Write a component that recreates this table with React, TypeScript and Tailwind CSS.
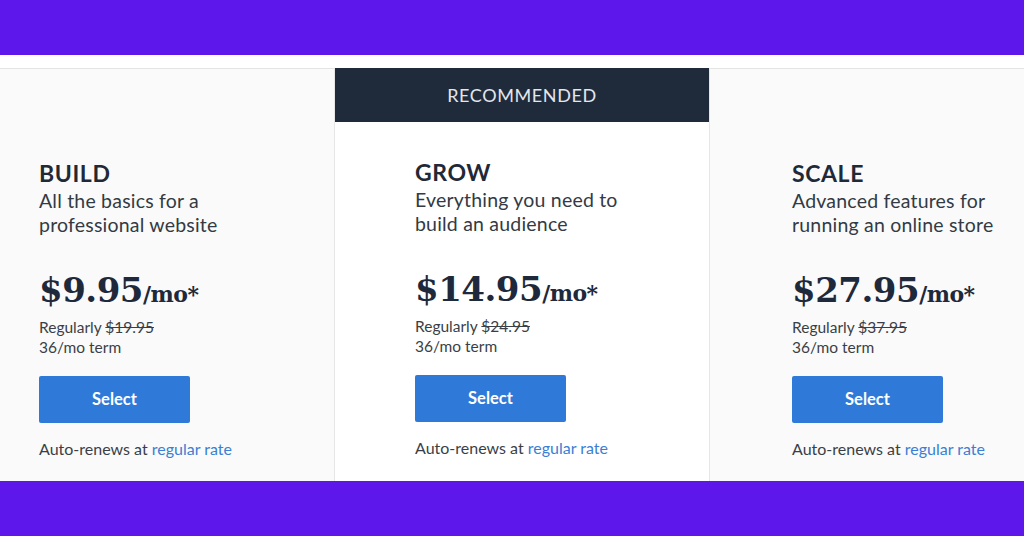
const plans = [
  {
    name: "BUILD",
    desc: ["All the basics for a", "professional website"],
    price: "$9.95",
    regular: "$19.95",
  },
  {
    name: "GROW",
    desc: ["Everything you need to", "build an audience"],
    price: "$14.95",
    regular: "$24.95",
  },
  {
    name: "SCALE",
    desc: ["Advanced features for", "running an online store"],
    price: "$27.95",
    regular: "$37.95",
  },
];

type Plan = (typeof plans)[number];

const PlanBody = ({ plan }: { plan: Plan }) => (
  <div className="flex flex-col">
    <h2 className="text-[23px] leading-[26px] font-bold text-[#1f2937] tracking-[0.6px]">
      {plan.name}
    </h2>
    <p className="mt-[3px] text-[19.5px] leading-[24px] text-[#333a44] tracking-[0.2px]">
      {plan.desc[0]}
      <br />
      {plan.desc[1]}
    </p>
    <div className="mt-[33px] flex items-baseline text-[#1e293b] font-['DejaVu_Serif',serif] font-bold">
      <span className="text-[34px] leading-[40px] tracking-[-0.5px]">{plan.price}</span>
      <span className="text-[22px] leading-[40px] tracking-[-0.5px]">/mo*</span>
    </div>
    <p className="mt-[3px] text-[15.5px] leading-[20px] text-[#3a3f47]">
      Regularly <span className="line-through">{plan.regular}</span>
    </p>
    <p className="text-[15.5px] leading-[20px] text-[#3a3f47]">36/mo term</p>
    <button className="mt-[19px] w-[151px] h-[47px] rounded-[2px] bg-[#2f7ad8] text-white text-[16.5px] font-bold">
      Select
    </button>
    <p className="mt-[16px] text-[16px] leading-[20px] text-[#3a3f47]">
      Auto-renews at <span className="text-[#3a7fd4]">regular rate</span>
    </p>
  </div>
);

export default function App() {
  return (
    <div className="w-[1024px] h-[536px] flex flex-col bg-white font-['Lato','Liberation_Sans',sans-serif]">
      <div className="h-[55px] bg-[#5e17eb]" />
      <div className="h-[13px] bg-white" />
      <div className="flex-1 grid grid-cols-[334px_376px_1fr]">
        <div className="bg-[#fafafa] border-t border-[#e4e4e4] pl-[39px] pt-[91px]">
          <PlanBody plan={plans[0]} />
        </div>
        <div className="flex flex-col bg-white border-x border-[#e6e6e6]">
          <div className="h-[54px] bg-[#1f2a3b] flex items-center justify-center text-[#e3e6eb] text-[18px] tracking-[0.6px]">
            RECOMMENDED
          </div>
          <div className="pl-[80px] pt-[37px]">
            <PlanBody plan={plans[1]} />
          </div>
        </div>
        <div className="bg-[#fafafa] border-t border-[#e4e4e4] pl-[82px] pt-[91px]">
          <PlanBody plan={plans[2]} />
        </div>
      </div>
      <div className="h-[55px] bg-[#5e17eb]" />
    </div>
  );
}
